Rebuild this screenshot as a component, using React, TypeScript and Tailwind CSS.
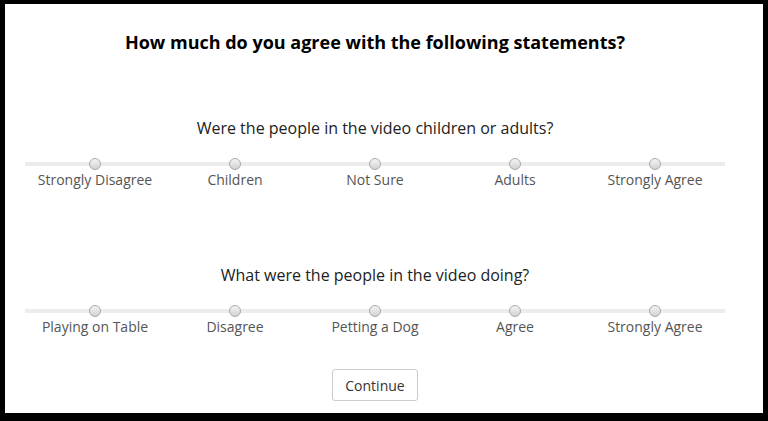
import React from "react";

const questions = [
  {
    id: "q1",
    text: "Were the people in the video children or adults?",
    choices: ["Strongly Disagree", "Children", "Not Sure", "Adults", "Strongly Agree"],
  },
  {
    id: "q2",
    text: "What were the people in the video doing?",
    choices: ["Playing on Table", "Disagree", "Petting a Dog", "Agree", "Strongly Agree"],
  },
];

const Slider = ({ choices }: { choices: string[] }) => (
  <div className="relative ml-[20px] w-[700px]">
    <div className="absolute left-0 right-0 top-[4px] h-[4px] bg-[#ececec]" />
    <div className="relative grid grid-cols-5">
      {choices.map((c) => (
        <div key={c} className="flex flex-col items-center">
          <div className="h-[12px] w-[12px] rounded-full border border-[#aaaaaa] bg-gradient-to-b from-[#f4f4f4] to-[#d2d2d2]" />
          <div className="mt-[1px] text-[14px] leading-[18px] text-[#555555]">{c}</div>
        </div>
      ))}
    </div>
  </div>
);

const App = () => {
  return (
    <div
      className="h-[421px] w-[768px] border-b-[8px] border-l-[5px] border-r-[5px] border-t-[4px] border-black bg-white"
      style={{ fontFamily: '"Open Sans", sans-serif' }}
    >
      <div className="w-[740px]">
        <h1 className="pt-[26px] text-center text-[18px] font-bold leading-[24px] text-black">
          How much do you agree with the following statements?
        </h1>

        {/*--------------- questions ---------------*/}
        {questions.map((q, i) => (
          <div key={q.id} className={i === 0 ? "mt-[62px]" : "mt-[74px]"}>
            <p className="mb-[18px] text-center text-[16px] leading-[24px] text-[#222222]">{q.text}</p>
            <Slider choices={q.choices} />
          </div>
        ))}

        <div className="mt-[33px] flex justify-center">
          <button className="h-[32px] w-[86px] rounded-[3px] border border-[#cccccc] bg-white text-[14px] text-[#333333]">
            Continue
          </button>
        </div>
      </div>
    </div>
  );
};

export default App;
